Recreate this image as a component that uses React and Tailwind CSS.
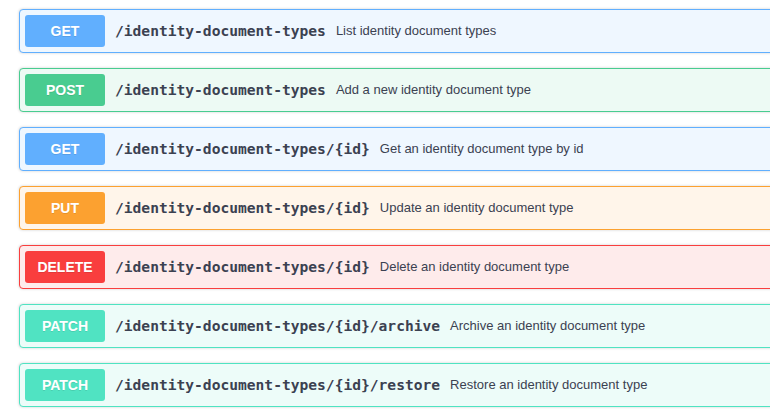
// App.jsx — swagger-style operation list

const styles = {
    get: { block: 'border-[#61affe] bg-[#eff7ff]', badge: 'bg-[#61affe]' },
    post: { block: 'border-[#49cc90] bg-[#edfaf4]', badge: 'bg-[#49cc90]' },
    put: { block: 'border-[#fca130] bg-[#fff5ea]', badge: 'bg-[#fca130]' },
    delete: { block: 'border-[#f93e3e] bg-[#feebeb]', badge: 'bg-[#f93e3e]' },
    patch: { block: 'border-[#50e3c2] bg-[#edfcf9]', badge: 'bg-[#50e3c2]' },
};

const ops = [
    ['get', '/identity-document-types', 'List identity document types'],
    ['post', '/identity-document-types', 'Add a new identity document type'],
    ['get', '/identity-document-types/{id}', 'Get an identity document type by id'],
    ['put', '/identity-document-types/{id}', 'Update an identity document type'],
    ['delete', '/identity-document-types/{id}', 'Delete an identity document type'],
    ['patch', '/identity-document-types/{id}/archive', 'Archive an identity document type'],
    ['patch', '/identity-document-types/{id}/restore', 'Restore an identity document type'],
];

function OpBlock({ method, path, summary }) {
    const s = styles[method];
    return (
        <div className={`flex items-center border rounded-[4px] p-[5px]
                         shadow-[0_0_3px_rgba(0,0,0,0.19)] ${s.block}`}>
            <span className={`w-[80px] h-[32px] shrink-0 flex items-center justify-center
                              rounded-[3px] text-white text-[14px] font-bold
                              [text-shadow:0_1px_0_rgba(0,0,0,0.1)]
                              font-['Liberation_Sans',Arial,sans-serif] ${s.badge}`}>
                {method.toUpperCase()}
            </span>
            <span className="px-[10px] text-[14.6px] font-bold text-[#3b4151]
                             font-['DejaVu_Sans_Mono',monospace] whitespace-nowrap">
                {path}
            </span>
            <span className="text-[13px] text-[#3b4151] whitespace-nowrap
                             font-['Liberation_Sans',Arial,sans-serif]">
                {summary}
            </span>
        </div>
    );
}

export default function App() {
    return (
        <div className="w-[770px] h-[420px] overflow-hidden bg-white">
            <div className="pt-[9px] pl-[19px] w-[800px] flex flex-col gap-[15px]">
                {ops.map(([m, p, d], i) => (
                    <OpBlock key={i} method={m} path={p} summary={d} />
                ))}
            </div>
        </div>
    );
}
